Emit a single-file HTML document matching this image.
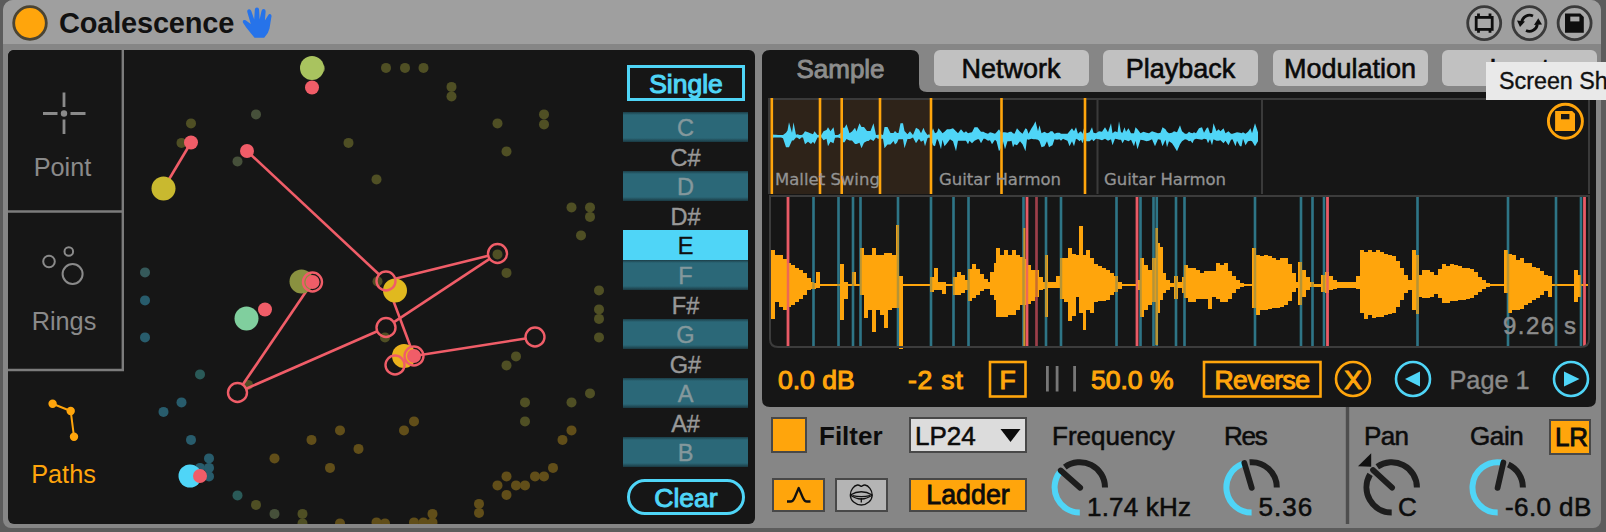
<!DOCTYPE html>
<html lang="en">
<head>
<meta charset="utf-8">
<title>Coalescence</title>
<style>
html,body{margin:0;padding:0;background:#5c5c5c;}
body{width:1606px;height:532px;overflow:hidden;position:relative;font-family:"Liberation Sans",sans-serif;}
.abs{position:absolute;}
#frame{position:absolute;left:0;top:0;width:1606px;height:532px;background:#5c5c5c;}
#body{position:absolute;left:3px;top:0;width:1598px;height:528px;background:#868686;border-radius:10px 10px 8px 8px;overflow:hidden;}
#titlebar{position:absolute;left:0;top:0;width:1598px;height:44px;background:#9f9f9f;}
#title{position:absolute;left:59px;top:6px;font-size:29px;font-weight:bold;color:#111;letter-spacing:-0.2px;line-height:34px;}
#leftpanel{position:absolute;left:8px;top:50px;width:747px;height:473.5px;background:#161616;border-radius:6px;overflow:hidden;}
#rightpanel{position:absolute;left:762px;top:50px;width:834px;height:357px;}
.tabbtn{position:absolute;top:50px;height:36px;background:#c1c1c1;border-radius:6px;color:#0a0a0a;font-size:27px;line-height:39px;overflow:hidden;text-align:center;-webkit-text-stroke:0.6px #0a0a0a;}
.lbl{position:absolute;font-size:26px;line-height:30px;color:#0c0c0c;white-space:nowrap;-webkit-text-stroke:0.55px #0c0c0c;}
.olbl{position:absolute;font-size:26.5px;line-height:30px;color:#ffa50c;-webkit-text-stroke:1.1px #ffa50c;white-space:nowrap;}
.mode{position:absolute;left:0;width:113px;text-align:center;font-size:25.3px;line-height:28px;color:#8a8a8a;}
.note{position:absolute;left:623px;width:125px;height:29.500px;line-height:32px;overflow:hidden;text-align:center;font-size:23.5px;color:#999;-webkit-text-stroke:0.4px currentColor;}
.note.on{background:linear-gradient(to bottom,#1c3f49 0,#2b6878 3px,#2b6878 26px,#1c3f49 29.500px);color:#84989c;}
.note.sel{background:#4fd5f7;color:#101010;}
.btn{position:absolute;box-sizing:border-box;border:2.500px solid #484848;}
</style>
</head>
<body>
<div id="frame"></div>
<div id="body">
  <div id="titlebar"></div>
</div>

<!-- title bar -->
<svg class="abs" style="left:0;top:0" width="1606" height="50" viewBox="0 0 1606 50">
  <circle cx="30" cy="23" r="16.3" fill="#ffa50c" stroke="#4a4434" stroke-width="2.8"/>
  <!-- hand icon -->
  <g fill="#2673ea">
    <path d="M254.500 37.700 L246.200 27.500 L243.200 23 Q242 20.500 244 20 Q245.500 19.800 247 21.200 L250.800 24 L247.300 12 Q246.800 9.600 248.800 9.200 Q250.600 8.900 251.300 11 L254.200 19.500 L254.800 10 Q254.900 7.600 257 7.600 Q259 7.600 259.100 10 L259.600 19.500 L261.500 11 Q262 8.800 264 9.100 Q265.900 9.500 265.600 11.800 L264.900 20.500 L268 15.500 Q269.200 13.600 270.600 14.300 Q272 15.200 271.300 17.500 L269.500 28.500 Q268.500 33.500 264.200 37.700 Z"/>
  </g>
  <!-- right icons -->
  <g transform="translate(0,0.8)">
  <g fill="#a8a8a8" stroke="#3a3a3a" stroke-width="2.800">
    <circle cx="1484.200" cy="22.300" r="16.500"/>
    <circle cx="1529.400" cy="22.300" r="16.500"/>
    <circle cx="1574.600" cy="22.300" r="16.500"/>
  </g>
  <g fill="none" stroke="#0e0e0e" stroke-width="2.800">
    <rect x="1476.200" y="16.600" width="16" height="12"/>
    <path d="M1478.500 12.700v3M1490 12.700v3M1478.500 29v3M1490 29v3"/>
    <path d="M1521.700 21.500 A8 8 0 0 1 1533 15.200"/>
    <path d="M1537.300 23.500 A8 8 0 0 1 1526 29.800"/>
  </g>
  <path d="M1517 19.800 L1525 20.800 L1520 26.300Z" fill="#0e0e0e"/>
  <path d="M1534 24.200 L1542 23.600 L1538.300 17.500Z" fill="#0e0e0e"/>
  <path d="M1565 12.700 H1580.300 L1583.800 16.200 V31.900 H1565Z" fill="#0e0e0e"/>
  <rect x="1570.300" y="15.800" width="9.100" height="4.800" fill="#a8a8a8"/>
  </g>
</svg>
<div id="title">Coalescence</div>

<!-- left panel -->
<div id="leftpanel">
  <svg class="abs" style="left:-8px;top:-50px" width="760" height="532" viewBox="0 0 760 532">
    <circle cx="386" cy="67.9" r="5" fill="#4f4f24"/>
<circle cx="405" cy="67.9" r="5" fill="#4f4f24"/>
<circle cx="423.5" cy="67.9" r="5" fill="#4f4f24"/>
<circle cx="451.5" cy="86.9" r="5" fill="#4f4f24"/>
<circle cx="451.5" cy="96.4" r="5" fill="#4f4f24"/>
<circle cx="256" cy="114.4" r="5" fill="#46503a"/>
<circle cx="191" cy="123.4" r="5" fill="#4f4f24"/>
<circle cx="181.5" cy="142.9" r="5" fill="#4f4f24"/>
<circle cx="237.5" cy="161.4" r="5" fill="#46503a"/>
<circle cx="348.5" cy="142.9" r="5" fill="#4f4f24"/>
<circle cx="376.5" cy="179.4" r="5" fill="#4f4f24"/>
<circle cx="497.5" cy="123.4" r="5" fill="#4f4f24"/>
<circle cx="544" cy="114.4" r="5" fill="#4f4f24"/>
<circle cx="544" cy="124.4" r="5" fill="#4f4f24"/>
<circle cx="506.5" cy="151.4" r="5" fill="#4f4f24"/>
<circle cx="571.5" cy="207.4" r="5" fill="#4f4f24"/>
<circle cx="590" cy="207.4" r="5" fill="#4f4f24"/>
<circle cx="590" cy="216.9" r="5" fill="#4f4f24"/>
<circle cx="581" cy="235.4" r="5" fill="#4f4f24"/>
<circle cx="506.5" cy="272.9" r="5" fill="#4f4f24"/>
<circle cx="599" cy="290.4" r="5" fill="#4f4f24"/>
<circle cx="599" cy="309.4" r="5" fill="#4f4f24"/>
<circle cx="599" cy="318.9" r="5" fill="#4f4f24"/>
<circle cx="599" cy="337.4" r="5" fill="#4f4f24"/>
<circle cx="516" cy="356.4" r="5" fill="#4f4f24"/>
<circle cx="506.5" cy="365.4" r="5" fill="#4f4f24"/>
<circle cx="590" cy="393.4" r="5" fill="#4f4f24"/>
<circle cx="525" cy="402.4" r="5" fill="#4f4f24"/>
<circle cx="571.5" cy="402.4" r="5" fill="#4f4f24"/>
<circle cx="414" cy="421.4" r="5" fill="#614e19"/>
<circle cx="404" cy="430.4" r="5" fill="#614e19"/>
<circle cx="525" cy="421.4" r="5" fill="#4f4f24"/>
<circle cx="571.5" cy="430.4" r="5" fill="#614e19"/>
<circle cx="562.5" cy="439.9" r="5" fill="#614e19"/>
<circle cx="553" cy="467.9" r="5" fill="#614e19"/>
<circle cx="544" cy="476.4" r="5" fill="#614e19"/>
<circle cx="535" cy="476.4" r="5" fill="#614e19"/>
<circle cx="506.5" cy="476.4" r="5" fill="#614e19"/>
<circle cx="497.5" cy="485.4" r="5" fill="#614e19"/>
<circle cx="516" cy="485.4" r="5" fill="#614e19"/>
<circle cx="525" cy="485.4" r="5" fill="#614e19"/>
<circle cx="506.5" cy="494.9" r="5" fill="#614e19"/>
<circle cx="479" cy="503.9" r="5" fill="#614e19"/>
<circle cx="479" cy="512.9" r="5" fill="#614e19"/>
<circle cx="432.5" cy="513.9" r="5" fill="#614e19"/>
<circle cx="423.5" cy="522.4" r="5" fill="#614e19"/>
<circle cx="414" cy="522.4" r="5" fill="#614e19"/>
<circle cx="432.5" cy="522.4" r="5" fill="#614e19"/>
<circle cx="385" cy="523.4" r="5" fill="#614e19"/>
<circle cx="376.5" cy="522.4" r="5" fill="#614e19"/>
<circle cx="340" cy="430.4" r="5" fill="#614e19"/>
<circle cx="311.5" cy="439.9" r="5" fill="#614e19"/>
<circle cx="358.5" cy="448.9" r="5" fill="#614e19"/>
<circle cx="274.5" cy="458.4" r="5" fill="#614e19"/>
<circle cx="330" cy="467.9" r="5" fill="#614e19"/>
<circle cx="256" cy="504.9" r="5" fill="#4f4f24"/>
<circle cx="274.5" cy="513.9" r="5" fill="#46503a"/>
<circle cx="302.5" cy="513.9" r="5" fill="#4f4f24"/>
<circle cx="302.5" cy="523.4" r="5" fill="#4f4f24"/>
<circle cx="340" cy="523.4" r="5" fill="#614e19"/>
<circle cx="145" cy="272.4" r="5" fill="#35595a"/>
<circle cx="145" cy="300.4" r="5" fill="#285c6c"/>
<circle cx="145" cy="337.4" r="5" fill="#285c6c"/>
<circle cx="200" cy="374.4" r="5" fill="#2a5a58"/>
<circle cx="181.5" cy="402.4" r="5" fill="#285c6c"/>
<circle cx="163.5" cy="411.9" r="5" fill="#285c6c"/>
<circle cx="191" cy="439.9" r="5" fill="#285c6c"/>
<circle cx="209" cy="458.4" r="5" fill="#285c6c"/>
<circle cx="209" cy="467.9" r="5" fill="#285c6c"/>
<circle cx="200" cy="467.9" r="5" fill="#285c6c"/>
<circle cx="209" cy="476.4" r="5" fill="#285c6c"/>
<circle cx="237.5" cy="495.4" r="5" fill="#2a5a58"/>
<circle cx="320" cy="68.4" r="5" fill="#6a7440"/>
<circle cx="377.5" cy="281.4" r="5" fill="#4f4f24"/>
<circle cx="497.5" cy="254.4" r="5" fill="#4f4f24"/>
<circle cx="385" cy="337.4" r="5" fill="#4f4f24"/>
<circle cx="248" cy="384.9" r="5" fill="#4f4f24"/>
<line x1="191.0" y1="142.5" x2="163.5" y2="188.5" stroke="#f05d68" stroke-width="2.6"/>
<line x1="247.0" y1="151.0" x2="379.1" y2="274.5" stroke="#f05d68" stroke-width="2.6"/>
<line x1="395.2" y1="278.7" x2="488.3" y2="255.8" stroke="#f05d68" stroke-width="2.6"/>
<line x1="489.6" y1="258.8" x2="393.9" y2="322.2" stroke="#f05d68" stroke-width="2.6"/>
<line x1="377.3" y1="331.3" x2="246.2" y2="388.7" stroke="#f05d68" stroke-width="2.6"/>
<line x1="242.8" y1="384.6" x2="312.5" y2="282.0" stroke="#f05d68" stroke-width="2.6"/>
<line x1="389.3" y1="289.9" x2="414.0" y2="356.0" stroke="#f05d68" stroke-width="2.6"/>
<line x1="414.0" y1="356.0" x2="525.6" y2="338.5" stroke="#f05d68" stroke-width="2.6"/>
<circle cx="312" cy="68" r="12" fill="#a9c35f"/>
<circle cx="163.5" cy="188.5" r="12" fill="#c9b92f"/>
<circle cx="301.5" cy="281.5" r="12" fill="#8a9140"/>
<circle cx="395" cy="290.5" r="12" fill="#e0b91f"/>
<circle cx="404" cy="356" r="12" fill="#eab21c"/>
<circle cx="246.5" cy="318.5" r="12" fill="#80cf9e"/>
<circle cx="190" cy="476" r="11.5" fill="#4fd5f7"/>
<circle cx="312" cy="87.5" r="7" fill="#f05d68"/>
<circle cx="191" cy="142.5" r="7" fill="#f05d68"/>
<circle cx="247" cy="151" r="7" fill="#f05d68"/>
<circle cx="312.5" cy="282" r="7" fill="#f05d68"/>
<circle cx="265" cy="309.5" r="7" fill="#f05d68"/>
<circle cx="414" cy="356" r="7" fill="#f05d68"/>
<circle cx="200" cy="476" r="7" fill="#f05d68"/>
<circle cx="386" cy="281" r="9.5" fill="none" stroke="#f05d68" stroke-width="2.4"/>
<circle cx="497.5" cy="253.5" r="9.5" fill="none" stroke="#f05d68" stroke-width="2.4"/>
<circle cx="386" cy="327.5" r="9.5" fill="none" stroke="#f05d68" stroke-width="2.4"/>
<circle cx="237.5" cy="392.5" r="9.5" fill="none" stroke="#f05d68" stroke-width="2.4"/>
<circle cx="312.5" cy="282" r="9.5" fill="none" stroke="#f05d68" stroke-width="2.4"/>
<circle cx="414" cy="356" r="9.5" fill="none" stroke="#f05d68" stroke-width="2.4"/>
<circle cx="535" cy="337" r="9.5" fill="none" stroke="#f05d68" stroke-width="2.4"/>
<circle cx="395" cy="365" r="9.5" fill="none" stroke="#f05d68" stroke-width="2.4"/>
    <!-- mode cells -->
    <rect x="0" y="40" width="122.500" height="330" fill="#161616"/>
    <g stroke="#7c7c7c" stroke-width="2.4" fill="none">
      <path d="M122.800 50 V370"/>
      <path d="M8 211.500 H123.500"/>
      <path d="M8 370 H124"/>
    </g>
    <!-- point icon -->
    <g stroke="#8a8a8a" stroke-width="2.800">
      <path d="M64 92.500V107M64 119.500V134M43 113.500H57.500M70.500 113.500H85.500"/>
    </g>
    <circle cx="64" cy="113.500" r="3.200" fill="#8a8a8a"/>
    <!-- rings icon -->
    <g stroke="#8a8a8a" stroke-width="2" fill="none">
      <circle cx="49" cy="261.500" r="5.800"/>
      <circle cx="68.800" cy="251.500" r="4.300"/>
      <circle cx="72.600" cy="274" r="10"/>
    </g>
    <!-- paths icon -->
    <g stroke="#ffa50c" stroke-width="2" fill="#ffa50c">
      <path d="M52.600 403.700L70.700 411L74 436.700" fill="none"/>
      <circle cx="52.600" cy="403.700" r="3.200"/>
      <circle cx="70.700" cy="411" r="3.200"/>
      <circle cx="74" cy="436.700" r="3.200"/>
    </g>
  </svg>
  <div class="mode" style="top:103px;left:-2px">Point</div>
  <div class="mode" style="top:257px;left:-0.500px">Rings</div>
  <div class="mode" style="top:410px;left:-1px;color:#ffa50c">Paths</div>
</div>

<!-- Single / notes / Clear -->
<div class="abs" style="left:627px;top:65px;width:118px;height:36px;box-sizing:border-box;border:3px solid #4fd5f7;color:#4fd5f7;-webkit-text-stroke:1.1px #4fd5f7;font-size:26.5px;line-height:32.500px;text-align:center;">Single</div>
<div class="note on" style="top:112.3px">C</div>
<div class="note" style="top:142.3px">C#</div>
<div class="note on" style="top:171.3px">D</div>
<div class="note" style="top:201.3px">D#</div>
<div class="note sel" style="top:230.3px">E</div>
<div class="note on" style="top:260.3px">F</div>
<div class="note" style="top:290.3px">F#</div>
<div class="note on" style="top:319.3px">G</div>
<div class="note" style="top:349.3px">G#</div>
<div class="note on" style="top:378.3px">A</div>
<div class="note" style="top:408.3px">A#</div>
<div class="note on" style="top:437.3px">B</div>
<div class="abs" style="left:627px;top:479px;width:118px;height:36px;box-sizing:border-box;border:3px solid #4fd5f7;border-radius:18px;color:#4fd5f7;-webkit-text-stroke:0.8px #4fd5f7;font-size:26.5px;line-height:32px;text-align:center;-webkit-text-stroke:1px #4fd5f7;">Clear</div>

<!-- right panel -->
<svg class="abs" style="left:0;top:0" width="1606" height="532" viewBox="0 0 1606 532">
  <!-- panel shape with tab -->
  <path d="M762 58 Q762 50 770 50 H911 Q919 50 919 58 V84 Q919 92 927 92 H1588 Q1596 92 1596 100 V399 Q1596 407 1588 407 H770 Q762 407 762 399 Z" fill="#161616"/>
  <!-- overview -->
  <rect x="769" y="98" width="162" height="96" fill="#2e2319"/>
  <g fill="none" stroke="#3a3a3a" stroke-width="2">
    <path d="M769 194 V99 H1589 V194"/>
    <path d="M1097.500 99V194M1262 99V194"/>
  </g>
  <path d="M772.0,133.2 L773.5,134.7 L776.0,134.7 L778.0,135.0 L781.0,135.0 L783.0,135.0 L786.0,132.7 L787.5,130.6 L789.0,122.2 L792.0,132.7 L793.5,122.2 L796.0,134.8 L797.5,134.2 L799.5,135.0 L801.5,135.0 L803.0,134.2 L805.0,131.3 L808.0,132.3 L811.0,133.4 L813.0,134.2 L814.5,131.2 L817.5,135.0 L820.0,134.7 L821.5,134.7 L823.5,131.2 L826.5,129.9 L828.0,127.2 L830.5,131.2 L833.5,127.2 L835.0,135.0 L838.0,135.0 L840.5,133.2 L843.0,127.8 L844.5,127.8 L846.5,124.2 L849.5,133.2 L852.0,131.4 L855.0,127.8 L856.5,131.4 L859.5,123.2 L861.5,127.1 L864.0,127.1 L867.0,131.0 L868.5,131.0 L870.5,131.0 L873.5,123.2 L876.0,135.0 L878.0,134.8 L880.5,134.2 L883.0,135.0 L884.5,127.1 L887.5,127.1 L890.5,132.9 L893.5,132.9 L895.0,131.0 L897.0,132.9 L898.5,132.9 L900.5,123.2 L903.0,123.2 L904.5,131.0 L907.5,134.2 L910.0,131.2 L913.0,134.9 L916.0,127.8 L919.0,129.6 L921.0,133.2 L923.5,127.8 L925.0,131.4 L927.5,135.0 L929.0,134.2 L930.5,135.0 L933.0,128.2 L935.0,133.2 L937.0,132.2 L938.5,128.2 L941.0,131.2 L942.5,133.2 L944.5,131.7 L947.0,129.2 L950.0,129.2 L953.0,128.2 L956.0,131.2 L958.0,133.2 L961.0,129.2 L964.0,132.7 L966.0,131.2 L968.0,133.2 L969.5,132.7 L972.0,132.2 L974.5,127.2 L977.5,127.2 L979.0,129.2 L981.0,131.7 L983.5,131.7 L985.0,132.7 L988.0,133.7 L990.0,132.2 L992.0,132.7 L995.0,133.7 L996.5,132.2 L999.0,129.2 L1001.5,133.2 L1003.0,132.2 L1005.0,132.2 L1007.5,132.7 L1010.0,131.7 L1011.5,131.7 L1013.0,133.2 L1014.5,133.7 L1017.0,128.2 L1020.0,131.7 L1022.5,133.7 L1025.5,128.2 L1027.0,129.2 L1028.5,133.7 L1031.5,128.2 L1033.5,125.2 L1035.5,121.2 L1038.0,131.2 L1039.5,125.2 L1041.5,133.2 L1044.5,131.7 L1047.0,133.2 L1049.0,132.7 L1050.5,131.2 L1052.5,131.2 L1054.5,133.7 L1057.0,132.7 L1059.5,132.7 L1061.0,133.7 L1063.0,133.7 L1065.0,133.7 L1067.5,133.7 L1069.5,131.2 L1072.0,128.2 L1074.0,131.2 L1076.0,127.2 L1078.0,133.7 L1079.5,132.2 L1081.0,131.2 L1082.5,133.7 L1084.0,128.2 L1086.5,133.2 L1089.5,132.2 L1092.0,127.2 L1093.5,132.7 L1096.0,133.2 L1099.0,131.2 L1102.0,131.7 L1105.0,127.2 L1108.0,132.2 L1111.0,123.2 L1112.5,133.2 L1115.0,131.2 L1117.5,132.2 L1119.0,121.2 L1121.0,132.2 L1122.5,132.7 L1124.5,127.2 L1126.0,131.7 L1128.5,128.2 L1131.0,133.2 L1134.0,133.2 L1135.5,127.2 L1137.5,129.2 L1140.5,133.2 L1143.5,131.7 L1146.5,132.7 L1149.0,133.2 L1152.0,131.2 L1155.0,132.2 L1158.0,133.2 L1160.5,132.7 L1162.5,127.2 L1165.5,129.2 L1167.0,131.7 L1169.0,133.2 L1172.0,132.7 L1174.0,131.2 L1177.0,132.2 L1180.0,125.2 L1182.0,131.2 L1185.0,133.7 L1187.0,133.7 L1189.0,131.7 L1190.5,132.7 L1192.5,133.2 L1194.0,132.2 L1196.0,133.2 L1199.0,128.2 L1202.0,127.2 L1204.0,132.7 L1206.5,128.2 L1208.0,127.2 L1210.0,133.2 L1212.0,132.7 L1213.5,123.2 L1216.5,131.2 L1218.5,129.2 L1220.5,131.2 L1223.5,128.2 L1225.5,133.2 L1228.5,131.2 L1231.0,133.7 L1232.5,133.7 L1235.5,132.7 L1237.0,132.2 L1240.0,132.7 L1241.5,133.2 L1243.0,132.2 L1245.5,133.7 L1248.0,131.7 L1250.5,128.2 L1252.0,133.2 L1255.0,123.2 L1258.0,132.2 L1258.0,141.2 L1255.0,146.2 L1252.0,141.2 L1250.5,140.7 L1248.0,141.2 L1245.5,145.2 L1243.0,138.7 L1241.5,146.2 L1240.0,146.2 L1237.0,140.7 L1235.5,146.2 L1232.5,139.2 L1231.0,139.7 L1228.5,145.2 L1225.5,140.7 L1223.5,143.2 L1220.5,140.2 L1218.5,140.7 L1216.5,140.7 L1213.5,139.2 L1212.0,145.2 L1210.0,139.2 L1208.0,143.2 L1206.5,139.2 L1204.0,138.7 L1202.0,139.7 L1199.0,139.2 L1196.0,138.7 L1194.0,139.7 L1192.5,143.2 L1190.5,140.7 L1189.0,141.2 L1187.0,139.7 L1185.0,139.2 L1182.0,141.2 L1180.0,144.2 L1177.0,151.2 L1174.0,146.2 L1172.0,143.2 L1169.0,141.2 L1167.0,147.2 L1165.5,139.7 L1162.5,146.2 L1160.5,139.7 L1158.0,139.2 L1155.0,146.2 L1152.0,139.2 L1149.0,140.7 L1146.5,141.2 L1143.5,140.2 L1140.5,139.7 L1137.5,149.2 L1135.5,140.7 L1134.0,146.2 L1131.0,139.7 L1128.5,141.2 L1126.0,140.2 L1124.5,139.7 L1122.5,143.2 L1121.0,139.7 L1119.0,139.7 L1117.5,139.2 L1115.0,138.7 L1112.5,145.2 L1111.0,139.2 L1108.0,140.7 L1105.0,138.7 L1102.0,140.2 L1099.0,139.2 L1096.0,138.7 L1093.5,141.2 L1092.0,139.2 L1089.5,141.2 L1086.5,141.2 L1084.0,138.7 L1082.5,143.2 L1081.0,139.7 L1079.5,141.2 L1078.0,139.7 L1076.0,138.7 L1074.0,146.2 L1072.0,141.2 L1069.5,146.2 L1067.5,140.7 L1065.0,139.7 L1063.0,138.7 L1061.0,140.7 L1059.5,139.2 L1057.0,139.7 L1054.5,139.2 L1052.5,145.2 L1050.5,146.2 L1049.0,147.2 L1047.0,141.2 L1044.5,146.2 L1041.5,147.2 L1039.5,141.2 L1038.0,139.7 L1035.5,139.2 L1033.5,139.2 L1031.5,138.7 L1028.5,139.7 L1027.0,139.2 L1025.5,151.2 L1022.5,144.2 L1020.0,141.2 L1017.0,145.2 L1014.5,144.2 L1013.0,147.2 L1011.5,140.7 L1010.0,141.2 L1007.5,141.2 L1005.0,149.2 L1003.0,141.2 L1001.5,147.2 L999.0,151.2 L996.5,141.2 L995.0,139.7 L992.0,144.2 L990.0,140.2 L988.0,140.7 L985.0,138.7 L983.5,138.7 L981.0,143.2 L979.0,139.2 L977.5,139.2 L974.5,140.7 L972.0,143.2 L969.5,140.7 L968.0,144.2 L966.0,140.7 L964.0,140.7 L961.0,140.7 L958.0,140.7 L956.0,151.2 L953.0,141.2 L950.0,139.2 L947.0,143.2 L944.5,146.2 L942.5,139.7 L941.0,149.2 L938.5,141.2 L937.0,138.7 L935.0,146.2 L933.0,145.2 L930.5,138.2 L929.0,137.4 L927.5,138.2 L925.0,146.2 L923.5,140.2 L921.0,141.7 L919.0,138.7 L916.0,143.2 L913.0,137.4 L910.0,138.9 L907.5,138.9 L904.5,148.2 L903.0,139.2 L900.5,139.2 L898.5,139.2 L897.0,142.8 L895.0,144.6 L893.5,141.0 L890.5,144.6 L887.5,144.6 L884.5,148.2 L883.0,138.7 L880.5,138.7 L878.0,138.7 L876.0,137.4 L873.5,141.0 L870.5,139.2 L868.5,141.0 L867.0,141.0 L864.0,142.8 L861.5,148.2 L859.5,142.8 L856.5,143.9 L855.0,143.9 L852.0,140.6 L849.5,140.6 L846.5,138.9 L844.5,142.2 L843.0,142.2 L840.5,138.3 L838.0,137.4 L835.0,137.8 L833.5,143.2 L830.5,141.7 L828.0,146.2 L826.5,138.7 L823.5,140.2 L821.5,137.6 L820.0,137.4 L817.5,137.6 L814.5,143.9 L813.0,141.8 L811.0,143.9 L808.0,141.8 L805.0,144.2 L803.0,137.4 L801.5,137.4 L799.5,139.2 L797.5,137.8 L796.0,137.4 L793.5,140.6 L792.0,140.6 L789.0,147.2 L787.5,147.2 L786.0,147.2 L783.0,138.2 L781.0,137.4 L778.0,137.4 L776.0,137.4 L773.5,137.4 L772.0,138.7Z" fill="#4fd5f7"/>
  <g fill="#ffa50c">
    <rect x="770.500" y="98" width="2.600" height="96"/>
    <rect x="818.700" y="98" width="2.600" height="96"/>
    <rect x="840.400" y="98" width="2.600" height="96"/>
    <rect x="878.700" y="98" width="2.600" height="96"/>
    <rect x="929.700" y="98" width="2.600" height="96"/>
    <rect x="1000.200" y="98" width="2.600" height="96"/>
    <rect x="1083.700" y="98" width="2.600" height="96"/>
  </g>
  <!-- save icon orange -->
  <circle cx="1565.400" cy="121.300" r="17" fill="none" stroke="#ffa50c" stroke-width="2.900"/>
  <path d="M1555.100 111 H1572.200 L1575 113.800 V131 H1555.100Z" fill="#ffa50c"/>
  <rect x="1561" y="114" width="8.400" height="5.300" fill="#161616"/>
  <!-- main waveform -->
  <rect x="770" y="196" width="1819" height="0" fill="none"/>
  <rect x="1139.25" y="197" width="2.5" height="149" fill="#2f7686"/>
<rect x="812.25" y="197" width="2.5" height="149" fill="#2f7686"/>
<rect x="837.25" y="197" width="2.5" height="149" fill="#2f7686"/>
<rect x="851.75" y="197" width="2.5" height="149" fill="#2f7686"/>
<rect x="859.25" y="197" width="2.5" height="149" fill="#2f7686"/>
<rect x="896.75" y="197" width="2.5" height="149" fill="#2f7686"/>
<rect x="929.75" y="197" width="2.5" height="149" fill="#2f7686"/>
<rect x="952.25" y="197" width="2.5" height="149" fill="#2f7686"/>
<rect x="967.25" y="197" width="2.5" height="149" fill="#2f7686"/>
<rect x="1022.25" y="197" width="2.5" height="149" fill="#2f7686"/>
<rect x="1044.75" y="197" width="2.5" height="149" fill="#2f7686"/>
<rect x="1059.75" y="197" width="2.5" height="149" fill="#2f7686"/>
<rect x="1115.25" y="197" width="2.5" height="149" fill="#2f7686"/>
<rect x="1152.25" y="197" width="2.5" height="149" fill="#2f7686"/>
<rect x="1155.55" y="197" width="2.5" height="149" fill="#2f7686"/>
<rect x="1174.75" y="197" width="2.5" height="149" fill="#2f7686"/>
<rect x="1183.25" y="197" width="2.5" height="149" fill="#2f7686"/>
<rect x="1253.75" y="197" width="2.5" height="149" fill="#2f7686"/>
<rect x="1299.75" y="197" width="2.5" height="149" fill="#2f7686"/>
<rect x="1311.25" y="197" width="2.5" height="149" fill="#2f7686"/>
<rect x="1322.75" y="197" width="2.5" height="149" fill="#2f7686"/>
<rect x="1416.25" y="197" width="2.5" height="149" fill="#2f7686"/>
<rect x="1506.75" y="197" width="2.5" height="149" fill="#2f7686"/>
<rect x="1554.75" y="197" width="2.5" height="149" fill="#2f7686"/>
<rect x="1579.75" y="197" width="2.5" height="149" fill="#2f7686"/>
<rect x="786.75" y="197" width="2.5" height="149" fill="#e85a66"/>
<rect x="1025.75" y="197" width="2.5" height="149" fill="#e85a66"/>
<rect x="1035.25" y="197" width="2.5" height="149" fill="#9c3f4a"/>
<rect x="1135.75" y="197" width="2.5" height="149" fill="#e85a66"/>
<rect x="1326.25" y="197" width="2.5" height="149" fill="#e85a66"/>
<rect x="1583.25" y="197" width="2.5" height="149" fill="#e85a66"/>
  <path d="M771,250 L775,250 L775,255 L779,255 L779,255 L783,255 L783,259 L787,259 L787,263 L791,263 L791,265 L795,265 L795,268 L799,268 L799,270 L803,270 L803,273 L807,273 L807,278 L811,278 L811,282 L814,282 L814,283 L816,283 L816,272 L820,272 L820,284 L840,284 L840,264 L844,264 L844,282 L848,282 L848,284 L852,284 L852,272 L856,272 L856,284 L860,284 L860,248 L864,248 L864,255 L868,255 L868,255 L872,255 L872,248 L876,248 L876,255 L880,255 L880,255 L884,255 L884,253 L888,253 L888,253 L892,253 L892,255 L896,255 L896,225 L899,225 L899,276 L903,276 L903,284 L930,284 L930,277 L934,277 L934,268 L938,268 L938,282 L942,282 L942,282 L946,282 L946,284 L953,284 L953,277 L957,277 L957,272 L961,272 L961,275 L965,275 L965,280 L968,280 L968,269 L972,269 L972,264 L976,264 L976,269 L980,269 L980,274 L984,274 L984,279 L988,279 L988,282 L990,282 L990,272 L994,272 L994,263 L996,263 L996,248 L1000,248 L1000,255 L1004,255 L1004,250 L1008,250 L1008,255 L1012,255 L1012,250 L1016,250 L1016,255 L1020,255 L1020,257 L1023.3,257 L1023.3,228 L1025.3,228 L1025.3,259 L1027,259 L1027,265 L1031,265 L1031,270 L1035,270 L1035,270 L1039,270 L1039,277 L1043,277 L1043,282 L1045,282 L1045,255 L1048,255 L1048,282 L1056,282 L1056,276 L1060,276 L1060,258 L1064,258 L1064,258 L1068,258 L1068,248 L1072,248 L1072,254 L1076,254 L1076,255 L1079,255 L1079,226 L1083,226 L1083,255 L1086,255 L1086,250 L1090,250 L1090,258 L1094,258 L1094,264 L1098,264 L1098,266 L1102,266 L1102,268 L1106,268 L1106,270 L1110,270 L1110,273 L1114,273 L1114,276 L1118,276 L1118,282 L1122,282 L1122,284 L1136,284 L1136,280 L1140,280 L1140,258 L1144,258 L1144,265 L1148,265 L1148,270 L1152,270 L1152,258 L1155.5,258 L1155.5,228 L1158,228 L1158,243 L1160,243 L1160,247 L1163,247 L1163,273 L1166,273 L1166,280 L1170,280 L1170,283 L1174,283 L1174,276 L1178,276 L1178,282 L1182,282 L1182,277 L1184,277 L1184,265 L1188,265 L1188,268 L1192,268 L1192,268 L1196,268 L1196,270 L1200,270 L1200,273 L1204,273 L1204,271 L1208,271 L1208,271 L1212,271 L1212,271 L1216,271 L1216,263 L1220,263 L1220,265 L1224,265 L1224,263 L1228,263 L1228,271 L1232,271 L1232,276 L1236,276 L1236,280 L1240,280 L1240,283 L1244,283 L1244,284 L1252,284 L1252,248 L1256,248 L1256,255 L1260,255 L1260,256 L1264,256 L1264,255 L1268,255 L1268,256 L1272,256 L1272,258 L1276,258 L1276,260 L1280,260 L1280,258 L1284,258 L1284,258 L1288,258 L1288,264 L1292,264 L1292,273 L1296,273 L1296,282 L1298,282 L1298,262 L1302,262 L1302,270 L1306,270 L1306,277 L1310,277 L1310,282 L1314,282 L1314,284 L1321,284 L1321,275 L1325,275 L1325,272 L1329,272 L1329,276 L1333,276 L1333,280 L1337,280 L1337,282 L1356,282 L1356,276 L1360,276 L1360,250 L1364,250 L1364,252 L1368,252 L1368,250 L1372,250 L1372,252 L1376,252 L1376,250 L1380,250 L1380,252 L1384,252 L1384,254 L1388,254 L1388,255 L1392,255 L1392,256 L1396,256 L1396,261 L1400,261 L1400,268 L1404,268 L1404,275 L1408,275 L1408,280 L1412,280 L1412,250 L1416,250 L1416,255 L1419,255 L1419,275 L1422,275 L1422,270 L1426,270 L1426,270 L1430,270 L1430,272 L1434,272 L1434,275 L1438,275 L1438,269 L1442,269 L1442,264 L1446,264 L1446,266 L1450,266 L1450,264 L1454,264 L1454,265 L1458,265 L1458,266 L1462,266 L1462,268 L1466,268 L1466,268 L1470,268 L1470,269 L1474,269 L1474,272 L1478,272 L1478,277 L1482,277 L1482,280 L1486,280 L1486,283 L1490,283 L1490,284 L1504,284 L1504,250 L1508,250 L1508,254 L1512,254 L1512,255 L1516,255 L1516,260 L1520,260 L1520,258 L1524,258 L1524,263 L1528,263 L1528,263 L1532,263 L1532,267 L1536,267 L1536,268 L1540,268 L1540,271 L1544,271 L1544,275 L1548,275 L1548,276 L1552,276 L1552,284 L1574,284 L1574,270 L1578,270 L1578,275 L1581,275 L1581,284 L1589,284 L1589,286 L1581,286 L1581,297 L1578,297 L1578,302 L1574,302 L1574,286 L1552,286 L1552,297 L1548,297 L1548,291 L1544,291 L1544,295 L1540,295 L1540,298 L1536,298 L1536,300 L1532,300 L1532,303 L1528,303 L1528,305 L1524,305 L1524,309 L1520,309 L1520,310 L1516,310 L1516,310 L1512,310 L1512,313 L1508,313 L1508,293 L1504,293 L1504,286 L1490,286 L1490,287 L1486,287 L1486,289 L1482,289 L1482,292 L1478,292 L1478,295 L1474,295 L1474,298 L1470,298 L1470,299 L1466,299 L1466,300 L1462,300 L1462,300 L1458,300 L1458,301 L1454,301 L1454,301 L1450,301 L1450,303 L1446,303 L1446,303 L1442,303 L1442,298 L1438,298 L1438,294 L1434,294 L1434,297 L1430,297 L1430,298 L1426,298 L1426,298 L1422,298 L1422,297 L1419,297 L1419,314 L1416,314 L1416,310 L1412,310 L1412,290 L1408,290 L1408,293 L1404,293 L1404,300 L1400,300 L1400,307 L1396,307 L1396,313 L1392,313 L1392,314 L1388,314 L1388,315 L1384,315 L1384,317 L1380,317 L1380,317 L1376,317 L1376,318 L1372,318 L1372,315 L1368,315 L1368,319 L1364,319 L1364,313 L1360,313 L1360,289 L1356,289 L1356,288 L1337,288 L1337,289 L1333,289 L1333,290 L1329,290 L1329,293 L1325,293 L1325,292 L1321,292 L1321,287 L1314,287 L1314,287 L1310,287 L1310,290 L1306,290 L1306,297 L1302,297 L1302,305 L1298,305 L1298,288 L1296,288 L1296,292 L1292,292 L1292,301 L1288,301 L1288,305 L1284,305 L1284,307 L1280,307 L1280,308 L1276,308 L1276,308 L1272,308 L1272,309 L1268,309 L1268,310 L1264,310 L1264,310 L1260,310 L1260,315 L1256,315 L1256,308 L1252,308 L1252,286 L1244,286 L1244,287 L1240,287 L1240,289 L1236,289 L1236,293 L1232,293 L1232,299 L1228,299 L1228,302 L1224,302 L1224,302 L1220,302 L1220,299 L1216,299 L1216,297 L1212,297 L1212,309 L1208,309 L1208,299 L1204,299 L1204,299 L1200,299 L1200,299 L1196,299 L1196,302 L1192,302 L1192,302 L1188,302 L1188,298 L1184,298 L1184,293 L1182,293 L1182,288 L1178,288 L1178,299 L1174,299 L1174,287 L1170,287 L1170,290 L1166,290 L1166,293 L1163,293 L1163,300 L1160,300 L1160,313 L1158,313 L1158,345 L1155.5,345 L1155.5,302 L1152,302 L1152,305 L1148,305 L1148,310 L1144,310 L1144,317 L1140,317 L1140,290 L1136,290 L1136,286 L1122,286 L1122,289 L1118,289 L1118,292 L1114,292 L1114,295 L1110,295 L1110,300 L1106,300 L1106,301 L1102,301 L1102,301 L1098,301 L1098,302 L1094,302 L1094,313 L1090,313 L1090,310 L1086,310 L1086,330 L1083,330 L1083,313 L1079,313 L1079,297 L1076,297 L1076,316 L1072,316 L1072,321 L1068,321 L1068,302 L1064,302 L1064,299 L1060,299 L1060,288 L1056,288 L1056,288 L1048,288 L1048,317 L1045,317 L1045,289 L1043,289 L1043,290 L1039,290 L1039,297 L1035,297 L1035,301 L1031,301 L1031,304 L1027,304 L1027,305 L1025.3,305 L1025.3,347 L1023.3,347 L1023.3,305 L1020,305 L1020,310 L1016,310 L1016,315 L1012,315 L1012,315 L1008,315 L1008,317 L1004,317 L1004,317 L1000,317 L1000,317 L996,317 L996,300 L994,300 L994,295 L990,295 L990,289 L988,289 L988,289 L984,289 L984,291 L980,291 L980,295 L976,295 L976,298 L972,298 L972,301 L968,301 L968,290 L965,290 L965,293 L961,293 L961,295 L957,295 L957,295 L953,295 L953,286 L946,286 L946,294 L942,294 L942,290 L938,290 L938,290 L934,290 L934,292 L930,292 L930,286 L903,286 L903,349 L899,349 L899,308 L896,308 L896,308 L892,308 L892,310 L888,310 L888,328 L884,328 L884,315 L880,315 L880,310 L876,310 L876,332 L872,332 L872,310 L868,310 L868,318 L864,318 L864,295 L860,295 L860,286 L856,286 L856,286 L852,286 L852,286 L848,286 L848,299 L844,299 L844,320 L840,320 L840,286 L820,286 L820,288 L816,288 L816,289 L814,289 L814,289 L811,289 L811,290 L807,290 L807,295 L803,295 L803,299 L799,299 L799,302 L795,302 L795,305 L791,305 L791,307 L787,307 L787,310 L783,310 L783,307 L779,307 L779,302 L775,302 L775,319 L771,319Z" fill="#ffa50c"/>
  <rect x="1139.25" y="197" width="2.5" height="149" fill="#2f7686" opacity="0.35"/>
<rect x="812.25" y="197" width="2.5" height="149" fill="#2f7686" opacity="0.35"/>
<rect x="837.25" y="197" width="2.5" height="149" fill="#2f7686" opacity="0.35"/>
<rect x="851.75" y="197" width="2.5" height="149" fill="#2f7686" opacity="0.35"/>
<rect x="859.25" y="197" width="2.5" height="149" fill="#2f7686" opacity="0.35"/>
<rect x="896.75" y="197" width="2.5" height="149" fill="#2f7686" opacity="0.35"/>
<rect x="929.75" y="197" width="2.5" height="149" fill="#2f7686" opacity="0.35"/>
<rect x="952.25" y="197" width="2.5" height="149" fill="#2f7686" opacity="0.35"/>
<rect x="967.25" y="197" width="2.5" height="149" fill="#2f7686" opacity="0.35"/>
<rect x="1022.25" y="197" width="2.5" height="149" fill="#2f7686" opacity="0.35"/>
<rect x="1044.75" y="197" width="2.5" height="149" fill="#2f7686" opacity="0.35"/>
<rect x="1059.75" y="197" width="2.5" height="149" fill="#2f7686" opacity="0.35"/>
<rect x="1115.25" y="197" width="2.5" height="149" fill="#2f7686" opacity="0.35"/>
<rect x="1152.25" y="197" width="2.5" height="149" fill="#2f7686" opacity="0.35"/>
<rect x="1155.55" y="197" width="2.5" height="149" fill="#2f7686" opacity="0.35"/>
<rect x="1174.75" y="197" width="2.5" height="149" fill="#2f7686" opacity="0.35"/>
<rect x="1183.25" y="197" width="2.5" height="149" fill="#2f7686" opacity="0.35"/>
<rect x="1253.75" y="197" width="2.5" height="149" fill="#2f7686" opacity="0.35"/>
<rect x="1299.75" y="197" width="2.5" height="149" fill="#2f7686" opacity="0.35"/>
<rect x="1311.25" y="197" width="2.5" height="149" fill="#2f7686" opacity="0.35"/>
<rect x="1322.75" y="197" width="2.5" height="149" fill="#2f7686" opacity="0.35"/>
<rect x="1416.25" y="197" width="2.5" height="149" fill="#2f7686" opacity="0.35"/>
<rect x="1506.75" y="197" width="2.5" height="149" fill="#2f7686" opacity="0.35"/>
<rect x="1554.75" y="197" width="2.5" height="149" fill="#2f7686" opacity="0.35"/>
<rect x="1579.75" y="197" width="2.5" height="149" fill="#2f7686" opacity="0.35"/>
<rect x="786.75" y="197" width="2.5" height="149" fill="#e85a66" opacity="0.8"/>
<rect x="1025.75" y="197" width="2.5" height="149" fill="#e85a66" opacity="0.8"/>
<rect x="1035.25" y="197" width="2.5" height="149" fill="#9c3f4a" opacity="0.55"/>
<rect x="1135.75" y="197" width="2.5" height="149" fill="#e85a66" opacity="0.8"/>
<rect x="1326.25" y="197" width="2.5" height="149" fill="#e85a66" opacity="0.8"/>
<rect x="1583.25" y="197" width="2.5" height="149" fill="#e85a66" opacity="0.8"/>
  <path d="M770 196 H1589 V339 Q1589 347 1581 347 H778 Q770 347 770 339 Z" fill="none" stroke="#3c3c3c" stroke-width="2"/>
  <!-- F box, bars, reverse, X, arrows -->
  <g fill="none" stroke="#ffa50c" stroke-width="2.600">
    <rect x="990" y="362" width="35.500" height="34.500"/>
    <rect x="1204" y="362" width="116.500" height="34.500"/>
    <circle cx="1353" cy="379" r="17"/>
  </g>
  <g fill="#777">
    <rect x="1046" y="366" width="2.800" height="25.500"/>
    <rect x="1055.700" y="366" width="2.800" height="25.500"/>
    <rect x="1073.200" y="366" width="2.800" height="25.500"/>
  </g>
  <g fill="none" stroke="#4fd5f7" stroke-width="2.600">
    <circle cx="1413" cy="379" r="17"/>
    <circle cx="1571" cy="379" r="17"/>
  </g>
  <path d="M1405 379 L1420 371.500 V386.500Z" fill="#4fd5f7"/>
  <path d="M1579.500 379 L1564 371.500 V386.500Z" fill="#4fd5f7"/>
  <!-- divider in bottom -->
  <rect x="1345.800" y="407" width="3.400" height="117" fill="#4e4e4e"/>
</svg>

<!-- tabs -->
<div class="abs" style="left:762px;top:53px;width:157px;text-align:center;font-size:26px;line-height:32px;color:#8d8d8d;-webkit-text-stroke:0.9px #8d8d8d;">Sample</div>
<div class="tabbtn" style="left:933.500px;width:155px;">Network</div>
<div class="tabbtn" style="left:1103px;width:155px;">Playback</div>
<div class="tabbtn" style="left:1272.500px;width:155px;">Modulation</div>
<div class="tabbtn" style="left:1441.700px;width:155px;">Input</div>
<div class="abs" style="left:1486px;top:62px;width:120px;height:38px;background:#e9e9e9;color:#111;font-size:23.3px;line-height:38px;padding-left:13px;-webkit-text-stroke:0.35px #111;box-sizing:border-box;white-space:nowrap;overflow:hidden;">Screen Shot</div>

<!-- overview labels -->
<div class="abs" style="left:775px;top:168.500px;font-size:16.500px;line-height:22px;color:#939393;-webkit-text-stroke:0.3px #939393;font-family:'DejaVu Sans','Liberation Sans',sans-serif;white-space:nowrap;">Mallet Swing</div>
<div class="abs" style="left:939px;top:168.500px;font-size:16.500px;line-height:22px;color:#939393;-webkit-text-stroke:0.3px #939393;font-family:'DejaVu Sans','Liberation Sans',sans-serif;white-space:nowrap;">Guitar Harmon</div>
<div class="abs" style="left:1104px;top:168.500px;font-size:16.500px;line-height:22px;color:#939393;-webkit-text-stroke:0.3px #939393;font-family:'DejaVu Sans','Liberation Sans',sans-serif;white-space:nowrap;">Guitar Harmon</div>
<div class="abs" style="left:1503px;top:311.500px;font-size:24px;line-height:28px;color:#8c8c8c;white-space:nowrap;letter-spacing:1.500px;-webkit-text-stroke:0.5px #8c8c8c;">9.26 s</div>

<!-- sample controls row -->
<div class="olbl" style="left:778px;top:365px;">0.0 dB</div>
<div class="olbl" style="left:908px;top:365px;letter-spacing:0.800px;">-2 st</div>
<div class="olbl" style="left:990px;top:365px;width:35px;text-align:center;">F</div>
<div class="olbl" style="left:1091px;top:365px;">50.0 %</div>
<div class="olbl" style="left:1204px;top:365px;width:116px;text-align:center;letter-spacing:-0.5px;">Reverse</div>
<div class="olbl" style="left:1336px;top:365px;width:34px;text-align:center;">X</div>
<div class="lbl" style="left:1449.500px;top:365px;color:#8a8a8a;font-size:25.300px;-webkit-text-stroke:0.4px #8a8a8a;">Page 1</div>

<!-- filter section -->
<div class="btn" style="left:771px;top:417px;width:36px;height:36px;background:#ffa50c;"></div>
<div class="lbl" style="left:819px;top:421px;font-weight:bold;-webkit-text-stroke:0;">Filter</div>
<div class="btn" style="left:909px;top:417px;width:118px;height:36px;background:#dcdcdc;"></div>
<div class="lbl" style="left:915px;top:421px;">LP24</div>
<svg class="abs" style="left:1000px;top:428px" width="22" height="16"><path d="M0.500 1 H20.500 L10.500 14Z" fill="#0c0c0c"/></svg>
<div class="btn" style="left:772px;top:478px;width:53px;height:34px;background:#ffa50c;"></div>
<svg class="abs" style="left:772px;top:478px" width="53" height="34"><path d="M15 23.500 H18.500 Q21 23.500 22.500 20 L26.700 10 L31 20 Q32.500 23.500 35 23.500 H38.500" fill="none" stroke="#111" stroke-width="2.300" stroke-linejoin="round"/></svg>
<div class="btn" style="left:835px;top:478px;width:53px;height:34px;background:#b4b4b4;"></div>
<svg class="abs" style="left:835px;top:478px" width="53" height="34" fill="none" stroke="#111" stroke-width="1.300">
  <path d="M15.300 17 C15.300 12 19 7.500 22.500 7 C24.500 6.800 25.500 8.300 26.300 8.300 C27 8.300 28 6.800 30 7 C33.500 7.500 37.200 12 37.200 17 C37.200 22.500 32 27 26.300 27 C20.500 27 15.300 22.500 15.300 17 Z"/>
  <path d="M15.300 17 Q26.300 10.500 37.200 17"/>
  <path d="M15.300 17 Q26.300 25 37.200 17"/>
  <path d="M17.500 17.600 Q26.300 19.500 35 17.600"/>
  <path d="M26.300 20V24.500"/>
</svg>
<div class="btn" style="left:909px;top:478px;width:118px;height:34px;background:#ffa50c;"></div>
<div class="lbl" style="left:909px;top:480px;width:118px;text-align:center;font-size:26.800px;-webkit-text-stroke:0.8px #0c0c0c;">Ladder</div>

<div class="lbl" style="left:1052px;top:421px;">Frequency</div>
<div class="lbl" style="left:1224px;top:421px;letter-spacing:-1.2px;">Res</div>
<div class="lbl" style="left:1364px;top:421px;letter-spacing:-0.6px;">Pan</div>
<div class="lbl" style="left:1470px;top:421px;letter-spacing:-0.4px;">Gain</div>
<div class="btn" style="left:1549px;top:419px;width:42px;height:36px;background:#ffa50c;"></div>
<div class="lbl" style="left:1550.500px;top:422px;width:42px;text-align:center;-webkit-text-stroke:0.9px #0c0c0c;">LR</div>

<div class="lbl" style="left:1087px;top:491.500px;letter-spacing:0.2px;">1.74 kHz</div>
<div class="lbl" style="left:1258.500px;top:491.500px;letter-spacing:1px;">5.36</div>
<div class="lbl" style="left:1398px;top:491.500px;">C</div>
<div class="lbl" style="left:1505px;top:491.500px;letter-spacing:0.4px;">-6.0 dB</div>

<!-- knobs -->
<svg class="abs" style="left:0;top:0" width="1606" height="532" viewBox="0 0 1606 532" fill="none" stroke-width="6">
  <path d="M1079.80 512.60 A25.2 25.2 0 0 1 1059.81 472.06" stroke="#4fd5f7"/>
<path d="M1064.81 467.14 A25.2 25.2 0 0 1 1105.00 487.40" stroke="#1d1d1d"/>
<path d="M1080.17 487.73L1060.70 470.50" stroke="#1d1d1d" stroke-width="5.8" stroke-linecap="round"/>
<path d="M1251.60 512.60 A25.2 25.2 0 0 1 1242.77 463.80" stroke="#4fd5f7"/>
<path d="M1249.62 462.28 A25.2 25.2 0 0 1 1276.80 487.40" stroke="#1d1d1d"/>
<path d="M1251.74 487.88L1244.36 462.95" stroke="#1d1d1d" stroke-width="5.8" stroke-linecap="round"/>
<path d="M1391.70 512.60 A25.2 25.2 0 0 1 1370.10 474.42" stroke="#1d1d1d"/>
<path d="M1377.25 466.76 A25.2 25.2 0 0 1 1416.90 487.40" stroke="#1d1d1d"/>
<path d="M1392.07 487.74L1373.05 470.01" stroke="#1d1d1d" stroke-width="5.8" stroke-linecap="round"/>
<path d="M1497.70 512.60 A25.2 25.2 0 1 1 1501.56 462.50" stroke="#4fd5f7"/>
<path d="M1508.27 464.52 A25.2 25.2 0 0 1 1522.90 487.40" stroke="#1d1d1d"/>
<path d="M1497.59 487.89L1503.35 462.53" stroke="#1d1d1d" stroke-width="5.8" stroke-linecap="round"/>
<path d="M1371.2 453.300 V466.800 L1358 466.200 Z" fill="#111" stroke="none"/>
</svg>
</body>
</html>
